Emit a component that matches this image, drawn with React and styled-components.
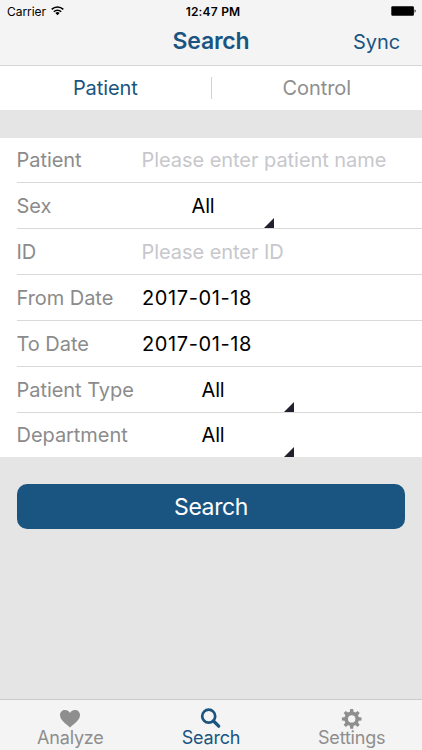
import React from "react";
import styled, { createGlobalStyle } from "styled-components";

const fields = [
  { label: "Patient", placeholder: "Please enter patient name", height: 45 },
  { label: "Sex", select: "All", width: 132, height: 46 },
  { label: "ID", placeholder: "Please enter ID", height: 46 },
  { label: "From Date", value: "2017-01-18", height: 46 },
  { label: "To Date", value: "2017-01-18", height: 46 },
  { label: "Patient Type", select: "All", width: 152, height: 46 },
  { label: "Department", select: "All", width: 152, height: 44 },
];

const teeth = [0, 45, 90, 135, 180, 225, 270, 315];

const WifiIcon = () => (
  <svg width="13" height="10" viewBox="0 0 13 10">
    <g fill="none" stroke="#000" strokeWidth="1.6">
      <path d="M0.7 3.4a8.3 8.3 0 0 1 11.6 0" />
      <path d="M2.8 5.7a5.3 5.3 0 0 1 7.4 0" />
    </g>
    <path d="M6.5 9.3L4.4 7.1a3 3 0 0 1 4.2 0z" />
  </svg>
);

const BatteryIcon = () => (
  <svg width="26" height="10" viewBox="0 0 26 10">
    <rect x="0.3" y="0.2" width="22.6" height="9.6" rx="1.3" />
    <path d="M23.6 3.3c1.4 0.5 1.4 2.9 0 3.4z" />
  </svg>
);

const HeartIcon = () => (
  <svg width="22" height="21" viewBox="0 0 22 21">
    <path
      fill="currentColor"
      d="M11 19.6C9.6 17.4 1 12.8 1 7.2 1 4 3.200 2 6 2c2.100 0 4 1.100 5 2.900C12 3.100 13.900 2 16 2c2.800 0 5 2 5 5.200 0 5.600-8.600 10.200-10 12.400z"
    />
  </svg>
);

const SearchIcon = () => (
  <svg width="22" height="21" viewBox="0 0 22 21">
    <g fill="none" stroke="currentColor">
      <circle cx="8.7" cy="8.2" r="6.500" strokeWidth="2.7" />
      <path d="M13.500 13l5.200 5.200" strokeWidth="3.3" strokeLinecap="round" />
    </g>
  </svg>
);

const GearIcon = () => (
  <svg width="22" height="21" viewBox="0 0 22 21">
    <circle
      cx="10.7"
      cy="10.9"
      r="5.5"
      fill="none"
      stroke="currentColor"
      strokeWidth="3.6"
    />
    {teeth.map((angle) => (
      <path
        key={angle}
        d="M8.8 4.500l0.400-3.400h3l0.400 3.400z"
        fill="currentColor"
        transform={`rotate(${angle} 10.7 10.9)`}
      />
    ))}
  </svg>
);

const App = () => {
  return (
    <Screen>
      <GlobalStyle />
      <StatusBar>
        <Carrier>
          Carrier <WifiIcon />
        </Carrier>
        <Clock>12:47 PM</Clock>
        <Battery>
          <BatteryIcon />
        </Battery>
      </StatusBar>

      <NavBar>
        <Title>Search</Title>
        <Sync>Sync</Sync>
      </NavBar>

      <Segments>
        <Segment $active>Patient</Segment>
        <Divider />
        <Segment>Control</Segment>
      </Segments>

      <Form>
        {fields.map((field) => (
          <Row key={field.label} $height={field.height}>
            <Label>{field.label}</Label>
            {field.placeholder && <Placeholder>{field.placeholder}</Placeholder>}
            {field.value && <Value>{field.value}</Value>}
            {field.select && (
              <Select $width={field.width}>
                {field.select}
                <Corner />
              </Select>
            )}
          </Row>
        ))}
      </Form>

      <SearchButton>Search</SearchButton>

      <TabBar>
        <Tab>
          <HeartIcon />
          <TabLabel>Analyze</TabLabel>
        </Tab>
        <Tab $active>
          <SearchIcon />
          <TabLabel>Search</TabLabel>
        </Tab>
        <Tab>
          <GearIcon />
          <TabLabel>Settings</TabLabel>
        </Tab>
      </TabBar>
    </Screen>
  );
};

export default App;

const GlobalStyle = createGlobalStyle`
  * {
    box-sizing: border-box;
  }
  body {
    margin: 0;
    font-family: Inter, "Liberation Sans", sans-serif;
    font-weight: 400;
  }
  svg {
    display: block;
    flex-shrink: 0;
  }
`;

const Screen = styled.div`
  width: 422px;
  height: 750px;
  display: flex;
  flex-direction: column;
  overflow: hidden;
  background-color: #e5e5e5;
`;

const StatusBar = styled.div`
  height: 22px;
  display: grid;
  grid-template-columns: 1fr auto 1fr;
  align-items: center;
  padding: 0 5px 0 7px;
  background-color: #f4f4f4;
  font-size: 12px;
`;

const Carrier = styled.div`
  display: flex;
  align-items: center;
  gap: 5px;
  letter-spacing: -0.05px;
`;

const Clock = styled.div`
  padding-left: 2px;
  font-weight: 600;
  letter-spacing: 0.2px;
`;

const Battery = styled.div`
  justify-self: end;
`;

const NavBar = styled.div`
  height: 44px;
  display: grid;
  grid-template-columns: 1fr auto 1fr;
  align-items: center;
  padding: 0 22px 5px;
  border-bottom: 1px solid #d6d6d6;
  background-color: #f4f4f4;
  color: #1a5582;
`;

const Title = styled.div`
  grid-column: 2;
  font-size: 23px;
  font-weight: 600;
  letter-spacing: -0.2px;
`;

const Sync = styled.div`
  justify-self: end;
  padding-top: 2px;
  font-size: 20px;
  letter-spacing: -0.1px;
`;

const Segments = styled.div`
  height: 44px;
  display: flex;
  align-items: center;
  background-color: #fff;
`;

const Segment = styled.div`
  flex: 1;
  text-align: center;
  font-size: 20px;
  letter-spacing: -0.1px;
  color: ${(props) => (props.$active ? "#1a5582" : "#8e8e8e")};
`;

const Divider = styled.div`
  width: 1px;
  height: 22px;
  background-color: #d2d2d2;
`;

const Form = styled.div`
  margin-top: 28px;
  padding-left: 17px;
  background-color: #fff;
`;

const Row = styled.div`
  height: ${(props) => props.$height}px;
  display: grid;
  grid-template-columns: 125px 1fr;
  align-items: center;
  font-size: 20px;
  border-bottom: 1px solid #d9d9d9;

  &:last-child {
    border-bottom: none;
  }
`;

const Label = styled.div`
  margin-left: -0.5px;
  color: #8b8b8b;
  letter-spacing: -0.05px;
  white-space: nowrap;
`;

const Placeholder = styled.div`
  margin-left: -0.5px;
  color: #c7c7cc;
  letter-spacing: -0.05px;
  white-space: nowrap;
`;

const Value = styled.div`
  color: #000;
  letter-spacing: 0.6px;
`;

const Select = styled.div`
  position: relative;
  width: ${(props) => props.$width}px;
  height: 100%;
  display: flex;
  align-items: center;
  justify-content: center;
  padding-right: 10px;
  color: #000;
  letter-spacing: -0.2px;
`;

const Corner = styled.span`
  position: absolute;
  right: 0;
  bottom: 0;
  width: 10px;
  height: 10px;
  background-color: #22202f;
  clip-path: polygon(100% 0, 100% 100%, 0 100%);
`;

const SearchButton = styled.button`
  height: 45px;
  margin: 27px 17px 0;
  padding: 0;
  border: none;
  border-radius: 10px;
  background-color: #1a5582;
  color: #fff;
  font-family: inherit;
  font-size: 23px;
  font-weight: 400;
  letter-spacing: -0.4px;
`;

const TabBar = styled.div`
  height: 51px;
  margin-top: auto;
  display: grid;
  grid-template-columns: repeat(3, 1fr);
  border-top: 1px solid #cbcbcb;
  background-color: #f4f4f4;
`;

const Tab = styled.div`
  display: flex;
  flex-direction: column;
  align-items: center;
  padding-top: 8px;
  color: ${(props) => (props.$active ? "#1a5582" : "#8e8e8e")};
`;

const TabLabel = styled.div`
  font-size: 18px;
  line-height: 18px;
  letter-spacing: -0.2px;
`;
